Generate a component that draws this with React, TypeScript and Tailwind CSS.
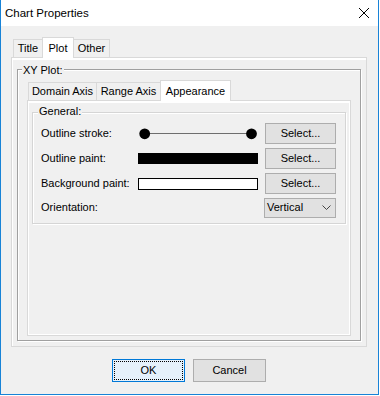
import React from "react";

const ui = "font-['Liberation_Sans',Arial,sans-serif] text-[11px] leading-[13px] text-black";

function Tab({ label, width, selected }: { label: string; width: string; selected?: boolean }) {
  return (
    <div
      className={`-ml-px flex items-center justify-center border border-b-0 border-[#d9d9d9] first:ml-0 ${width} ${
        selected ? "relative z-10 -mb-px h-[21px] bg-white" : "h-[18px] bg-[#f0f0f0]"
      }`}
    >
      {label}
    </div>
  );
}

function SelectButton() {
  return (
    <button type="button" className="flex h-[21px] w-[71px] items-center justify-center border border-[#adadad] bg-[#e1e1e1]">
      Select...
    </button>
  );
}

function Row({ label, children, control }: { label: string; children?: React.ReactNode; control: React.ReactNode }) {
  return (
    <div className="flex h-[21px] items-center">
      <div className="w-[97px] whitespace-nowrap">{label}</div>
      <div className="flex h-full w-[120px] items-center">{children}</div>
      <div className="ml-[7px]">{control}</div>
    </div>
  );
}

export default function App() {
  return (
    <div className={`${ui} flex h-[395px] w-[379px] flex-col border-x border-b border-[#1883d7] bg-[#f0f0f0]`}>
      {/* Title bar */}
      <div className="flex h-[26px] shrink-0 items-center justify-between bg-white pl-[4px] pr-[9px]">
        <span className="text-[11.5px]">Chart Properties</span>
        <svg width="10" height="10" viewBox="0 0 10 10" stroke="#000" strokeWidth="1">
          <line x1="0" y1="0" x2="10" y2="10" />
          <line x1="10" y1="0" x2="0" y2="10" />
        </svg>
      </div>

      {/* Body */}
      <div className="flex flex-1 flex-col pl-[10px] pr-[11px] pt-[11px]">
        <div className="flex h-[20px] items-end pl-[2px]">
          <Tab label="Title" width="w-[30px]" />
          <Tab label="Plot" width="w-[32px]" selected />
          <Tab label="Other" width="w-[37px]" />
        </div>

        <div className="flex h-[290px] flex-col border border-[#d9d9d9] px-[5px] pb-[5px] pt-[11px] shadow-[inset_1px_2px_0_#fff]">
          {/* XY Plot titled border */}
          <div className="relative flex flex-1 flex-col border border-[#a0a0a0] pb-[4px] pl-[9px] pr-[9px] pt-[10px] shadow-[inset_1px_1px_0_#fff,1px_1px_0_#fff]">
            <span className="absolute -top-[6px] left-[4px] bg-[#f0f0f0] px-[1px]">XY Plot:</span>

            <div className="flex h-[20px] items-end pl-[1px]">
              <Tab label="Domain Axis" width="w-[69px]" />
              <Tab label="Range Axis" width="w-[65px]" />
              <Tab label="Appearance" width="w-[71px]" selected />
            </div>

            <div className="flex flex-1 flex-col border border-[#d9d9d9] px-[4px] pt-[11px] shadow-[inset_1px_2px_0_#fff,inset_-1px_-1px_0_#fff]">
              {/* General titled border */}
              <div className="relative flex flex-col gap-[4px] border border-[#d5d5d5] pb-[5px] pl-[8px] pr-[9px] pt-[10px] shadow-[inset_1px_1px_0_#fff,1px_1px_0_#fff]">
                <span className="absolute -top-[8px] left-[5px] bg-[#f0f0f0] px-[1px]">General:</span>

                <Row label="Outline stroke:" control={<SelectButton />}>
                  <svg width="120" height="21" viewBox="0 0 120 21">
                    <line x1="6" y1="10.5" x2="114" y2="10.5" stroke="#6e6e6e" strokeWidth="1" />
                    <circle cx="6.7" cy="10.8" r="5.4" fill="#000" />
                    <circle cx="113.5" cy="10.8" r="5.4" fill="#000" />
                  </svg>
                </Row>

                <Row label="Outline paint:" control={<SelectButton />}>
                  <div className="h-[11px] w-full bg-black" />
                </Row>

                <Row label="Background paint:" control={<SelectButton />}>
                  <div className="h-[12px] w-full border border-black bg-white" />
                </Row>

                <div className="-mt-px">
                  <Row
                    label="Orientation:"
                    control={
                      <div className="flex h-[20px] w-[72px] items-center justify-between border border-[#adadad] bg-[#e1e1e1] pl-[2px] pr-[4px]">
                        <span>Vertical</span>
                        <svg width="9" height="5" viewBox="0 0 9 5" fill="none" stroke="#444" strokeWidth="1">
                          <polyline points="0.5,0.5 4.5,4.5 8.5,0.5" />
                        </svg>
                      </div>
                    }
                  />
                </div>
              </div>
            </div>
          </div>
        </div>

        {/* Dialog buttons */}
        <div className="flex flex-1 items-center justify-center gap-[8px]">
          <button type="button" className="h-[23px] w-[73px] border border-[#0078d7] bg-[#e5f1fb] p-[1px]">
            <span className="flex h-full w-full items-center justify-center border border-dotted border-black">OK</span>
          </button>
          <button type="button" className="flex h-[23px] w-[73px] items-center justify-center border border-[#adadad] bg-[#e1e1e1]">
            Cancel
          </button>
        </div>
      </div>
    </div>
  );
}
